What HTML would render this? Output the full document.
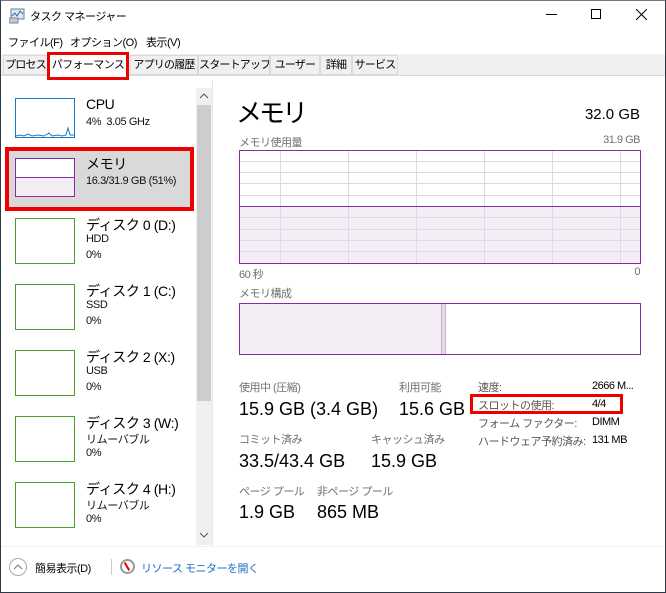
<!DOCTYPE html>
<html><head><meta charset="utf-8"><style>
*{margin:0;padding:0;box-sizing:border-box}
body{width:666px;height:593px;position:relative;background:#fff;font-family:"Liberation Sans","Noto Sans CJK JP",sans-serif;color:#000;overflow:hidden}
.a{position:absolute;white-space:nowrap}
.frame{position:absolute;left:0;top:0;width:666px;height:593px;border:1px solid #2b3a4a;border-top:1px solid #6a7a8a;pointer-events:none}
.tab{position:absolute;top:55px;height:20px;font-size:11px;letter-spacing:-0.8px;line-height:19px;text-align:center;border:1px solid #d9d9d9;background:#f0f0f0;white-space:nowrap;overflow:hidden}
.th{position:absolute;left:15px;width:60px;height:46px;border:1px solid #4aa02c;background:#fff}
.t1{position:absolute;left:86px;font-size:14px;letter-spacing:-0.4px;white-space:nowrap}
.t2{position:absolute;left:86px;font-size:11px;letter-spacing:-0.4px;color:#111;white-space:nowrap}
.lbl{font-size:11px;letter-spacing:-0.5px;color:#707070}
.val{font-size:18px}
.sm{font-size:11px;letter-spacing:-0.5px}
.gray{color:#555}
.m{font-size:11px;letter-spacing:-0.5px}
</style></head><body>
<svg class="a" style="left:9px;top:8px" width="16" height="16"><rect x="2" y="1" width="13" height="10" fill="#dfe9f3" stroke="#6a7f95"/><polyline points="3,8 6,5 8,8 11,3 14,6" fill="none" stroke="#2a6db0"/><rect x="0" y="10" width="9" height="5" fill="#bfc8d0" stroke="#7b8690"/></svg>
<div class="a m" style="left:30px;top:8px">タスク マネージャー</div>
<div class="a" style="left:546px;top:14px;width:11px;height:1px;background:#000"></div>
<div class="a" style="left:591px;top:9px;width:10px;height:10px;border:1px solid #000"></div>
<svg class="a" style="left:636px;top:9px" width="11" height="11"><path d="M0 0L11 11M11 0L0 11" stroke="#000" stroke-width="1"/></svg>
<div class="a m" style="left:8px;top:34px">ファイル(F)</div>
<div class="a m" style="left:70px;top:34px">オプション(O)</div>
<div class="a m" style="left:146px;top:34px">表示(V)</div>
<div class="a" style="left:0;top:54px;width:666px;height:22px;background:#f0f0f0;border-bottom:1px solid #d9d9d9"></div>
<div class="tab" style="left:3px;width:45px">プロセス</div>
<div class="tab" style="left:130px;width:68px">アプリの履歴</div>
<div class="tab" style="left:198px;width:72px">スタートアップ</div>
<div class="tab" style="left:270px;width:50px">ユーザー</div>
<div class="tab" style="left:320px;width:32px">詳細</div>
<div class="tab" style="left:352px;width:46px">サービス</div>
<div class="a" style="left:47px;top:52px;width:82px;height:28px;border:3px solid #e00;background:#fff;font-size:11px;letter-spacing:-0.6px;line-height:20px;text-align:center">パフォーマンス</div>
<div class="a" style="left:212px;top:80px;width:1px;height:466px;background:#e8e8e8"></div>
<div class="a" style="left:196px;top:88px;width:16px;height:457px;background:#f0f0f0"></div>
<div class="a" style="left:197px;top:105px;width:14px;height:296px;background:#cdcdcd"></div>
<svg class="a" style="left:199px;top:93px" width="10" height="6"><path d="M1 5L5 1L9 5" fill="none" stroke="#555"/></svg>
<svg class="a" style="left:199px;top:532px" width="10" height="6"><path d="M1 1L5 5L9 1" fill="none" stroke="#555"/></svg>
<div class="th" style="top:98px;height:40px;border-color:#1a79c2"></div>
<svg class="a" style="left:16px;top:118px" width="58" height="19"><polyline points="0,18 4,17 8,18 12,16 16,18 22,17 28,18 33,15 36,18 42,17 46,18 50,17 52,10 54,17 58,17" fill="none" stroke="#1a79c2"/></svg>
<div class="t1" style="top:96px">CPU</div>
<div class="t2" style="top:116px">4%&nbsp; 3.05 GHz</div>
<div class="a" style="left:8px;top:150px;width:184px;height:58px;background:#d9d9d9"></div>
<div class="a" style="left:5px;top:147px;width:189px;height:64px;border:4px solid #e00"></div>
<div class="a" style="left:15px;top:158px;width:60px;height:39px;border:1px solid #8b2aa0;background:#fff"></div>
<div class="a" style="left:16px;top:177px;width:58px;height:19px;border-top:1px solid #8b2aa0;background:#f2edf3"></div>
<div class="t1" style="top:154px">メモリ</div>
<div class="t2" style="top:175px">16.3/31.9 GB (51%)</div>
<div class="th" style="top:218px"></div><div class="t1" style="top:215px">ディスク 0 (D:)</div><div class="t2" style="top:233px">HDD</div><div class="t2" style="top:249px">0%</div>
<div class="th" style="top:284px"></div><div class="t1" style="top:281px">ディスク 1 (C:)</div><div class="t2" style="top:299px">SSD</div><div class="t2" style="top:315px">0%</div>
<div class="th" style="top:350px"></div><div class="t1" style="top:347px">ディスク 2 (X:)</div><div class="t2" style="top:365px">USB</div><div class="t2" style="top:381px">0%</div>
<div class="th" style="top:416px"></div><div class="t1" style="top:413px">ディスク 3 (W:)</div><div class="t2" style="top:431px">リムーバブル</div><div class="t2" style="top:447px">0%</div>
<div class="th" style="top:482px"></div><div class="t1" style="top:479px">ディスク 4 (H:)</div><div class="t2" style="top:497px">リムーバブル</div><div class="t2" style="top:513px">0%</div>
<div class="a" style="left:0;top:546px;width:666px;height:1px;background:#f0f0f0"></div>
<div class="a" style="left:9px;top:558px;width:18px;height:18px;border:1px solid #aaa;border-radius:50%"></div>
<svg class="a" style="left:13px;top:564px" width="10" height="6"><path d="M1 5L5 1L9 5" fill="none" stroke="#777"/></svg>
<div class="a m" style="left:35px;top:560px">簡易表示(D)</div>
<div class="a" style="left:111px;top:559px;width:1px;height:16px;background:#ccc"></div>
<div class="a" style="left:120px;top:559px;width:15px;height:15px;border:2px solid #999;border-radius:50%;background:#fff"></div>
<div class="a" style="left:126px;top:562px;width:2px;height:9px;background:#d00;transform:rotate(-30deg)"></div>
<div class="a m" style="left:141px;top:560px;color:#1a6fc9">リソース モニターを開く</div>
<div class="a" style="left:236px;top:93px;font-size:26px;letter-spacing:-3px">メモリ</div>
<div class="a" style="left:540px;top:106px;width:100px;text-align:right;font-size:15px">32.0 GB</div>
<div class="a lbl" style="left:239px;top:134px">メモリ使用量</div>
<div class="a lbl" style="left:540px;top:134px;width:100px;text-align:right">31.9 GB</div>
<svg class="a" style="left:239px;top:150px" width="402" height="114">
<rect x="0" y="56" width="402" height="58" fill="#f3eef5"/>
<g stroke="#e3d7e6" stroke-width="1">
<line x1="41.5" y1="0" x2="41.5" y2="114"/><line x1="109.5" y1="0" x2="109.5" y2="114"/><line x1="177.5" y1="0" x2="177.5" y2="114"/><line x1="245.5" y1="0" x2="245.5" y2="114"/><line x1="313.5" y1="0" x2="313.5" y2="114"/><line x1="381.5" y1="0" x2="381.5" y2="114"/>
<line x1="0" y1="11.5" x2="402" y2="11.5"/><line x1="0" y1="22.5" x2="402" y2="22.5"/><line x1="0" y1="33.5" x2="402" y2="33.5"/><line x1="0" y1="45.5" x2="402" y2="45.5"/><line x1="0" y1="67.5" x2="402" y2="67.5"/><line x1="0" y1="79.5" x2="402" y2="79.5"/><line x1="0" y1="90.5" x2="402" y2="90.5"/><line x1="0" y1="101.5" x2="402" y2="101.5"/>
</g>
<line x1="0" y1="56.5" x2="402" y2="56.5" stroke="#8b2aa0"/>
<rect x="0.5" y="0.5" width="401" height="113" fill="none" stroke="#8b2aa0"/>
</svg>
<div class="a lbl" style="left:239px;top:266px">60 秒</div>
<div class="a lbl" style="left:600px;top:266px;width:40px;text-align:right">0</div>
<div class="a lbl" style="left:239px;top:285px">メモリ構成</div>
<div class="a" style="left:239px;top:303px;width:402px;height:52px;border:1px solid #8b2aa0;background:#fff"></div>
<div class="a" style="left:240px;top:304px;width:201px;height:50px;background:#f3eef5"></div>
<div class="a" style="left:441px;top:304px;width:5px;height:50px;background:#e6d8ea;border-left:1px solid #c9b0d0;border-right:1px solid #c9b0d0"></div>
<div class="a lbl" style="left:239px;top:379px">使用中 (圧縮)</div>
<div class="a val" style="left:239px;top:399px">15.9 GB (3.4 GB)</div>
<div class="a lbl" style="left:399px;top:379px">利用可能</div>
<div class="a val" style="left:399px;top:399px">15.6 GB</div>
<div class="a lbl" style="left:239px;top:431px">コミット済み</div>
<div class="a val" style="left:239px;top:451px">33.5/43.4 GB</div>
<div class="a lbl" style="left:371px;top:431px">キャッシュ済み</div>
<div class="a val" style="left:371px;top:451px">15.9 GB</div>
<div class="a lbl" style="left:239px;top:483px">ページ プール</div>
<div class="a val" style="left:239px;top:502px">1.9 GB</div>
<div class="a lbl" style="left:317px;top:483px">非ページ プール</div>
<div class="a val" style="left:317px;top:502px">865 MB</div>
<div class="a sm gray" style="left:478px;top:379px">速度:</div><div class="a sm" style="left:592px;top:380px">2666 M...</div>
<div class="a sm gray" style="left:478px;top:397px">スロットの使用:</div><div class="a sm" style="left:592px;top:398px">4/4</div>
<div class="a sm gray" style="left:478px;top:415px">フォーム ファクター:</div><div class="a sm" style="left:592px;top:416px">DIMM</div>
<div class="a sm gray" style="left:478px;top:433px">ハードウェア予約済み:</div><div class="a sm" style="left:592px;top:434px">131 MB</div>
<div class="a" style="left:470px;top:394px;width:153px;height:20px;border:3px solid #e00"></div>
<div class="frame"></div>
</body></html>
